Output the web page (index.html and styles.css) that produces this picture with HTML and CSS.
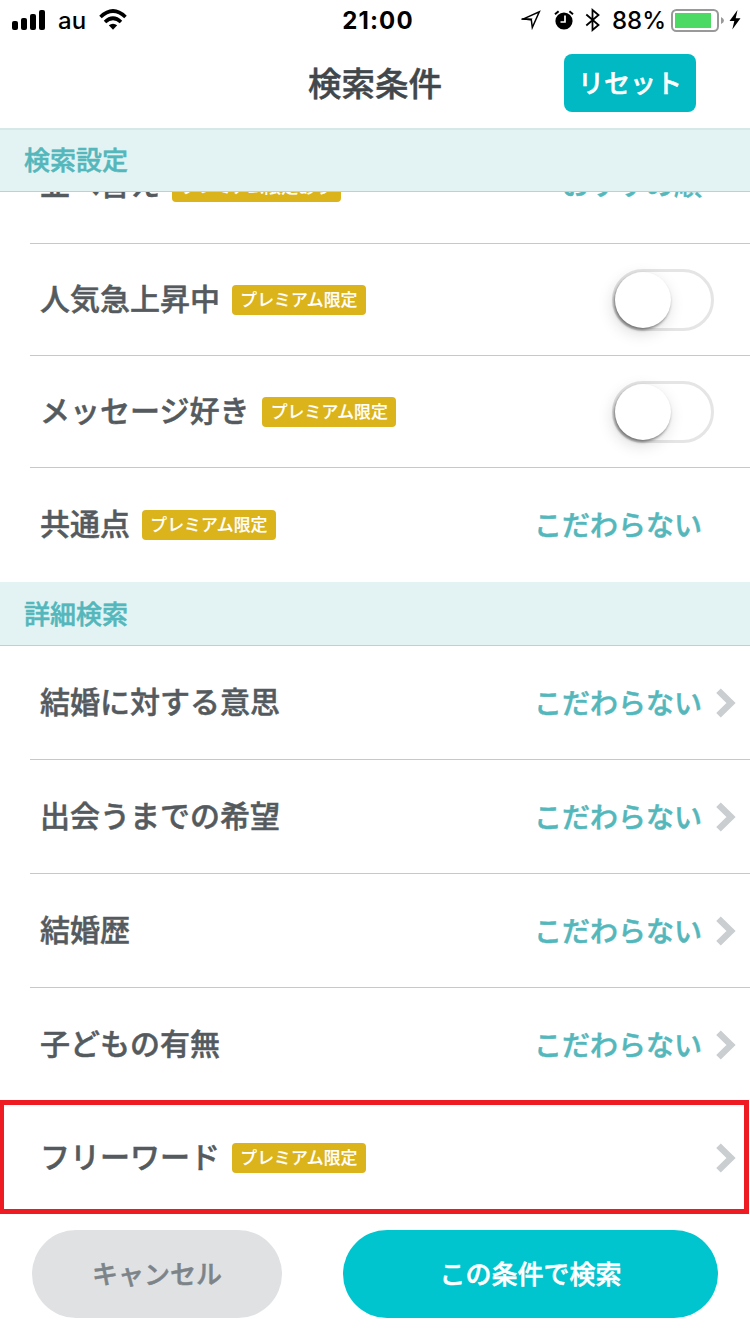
FILE: index.html
```
<!DOCTYPE html>
<html lang="ja">

<head>
    <meta charset="UTF-8">
    <meta name="viewport" content="width=device-width, initial-scale=1.0">
    <title>検索条件</title>
    <link rel="stylesheet" href="styles.css">
</head>

<body>
    <div class="status-bar">
        <div class="status-left">
            <svg class="signal" width="34" height="20" viewBox="0 0 34 20">
                <rect x="0" y="11" width="6" height="9" rx="2" />
                <rect x="9" y="8" width="6" height="12" rx="2" />
                <rect x="18" y="4" width="6" height="16" rx="2" />
                <rect x="27" y="0" width="6" height="20" rx="2" />
            </svg>
            <span class="carrier">au</span>
            <svg class="wifi" width="30" height="22" viewBox="0 0 30 22">
                <path d="M1.500 8Q14 -4 26.500 8M6 13Q14 5.500 22 13" fill="none" stroke="#000" stroke-width="3.600" />
                <path d="M9.800 16.300Q14 13 18.200 16.300L14 20.800Z" />
            </svg>
        </div>
        <div class="status-time">21:00</div>
        <div class="status-right">
            <svg class="location" width="20" height="20" viewBox="0 0 20 20">
                <path d="M2.500 8.900L18.300 1.800L11.300 17.500L10.300 9.700Z" fill="none" stroke="#000" stroke-width="1.500" />
                <path d="M0.500 8.300L11.500 8.500L10.500 10.200L1 9.700Z" />
            </svg>
            <svg class="alarm" width="20" height="20" viewBox="0 0 20 20">
                <circle cx="10" cy="11" r="8.600" />
                <path d="M1 4.300L4.600 1.300M19 4.300L15.400 1.300" stroke="#000" stroke-width="2" />
                <path d="M11 5.500V12H6.500" fill="none" stroke="#fff" stroke-width="1.700" />
            </svg>
            <svg class="bluetooth" width="16" height="24" viewBox="0 0 16 24">
                <path d="M1.300 6.500L13.500 17L7.500 22V2L13.500 7L1.300 17.500" fill="none" stroke="#000" stroke-width="1.800" />
            </svg>
            <span class="percent">88%</span>
            <svg class="battery" width="54" height="24" viewBox="0 0 54 24">
                <rect x="1" y="2" width="46" height="21" rx="4.500" fill="#fff" stroke="#999" stroke-width="2" />
                <rect x="4" y="5" width="36" height="15" fill="#4cd964" />
                <path d="M50 9Q53 10.500 53 12.500T50 16Z" fill="#999" />
            </svg>
            <svg class="bolt" width="12" height="20" viewBox="0 0 12 20">
                <path d="M8.500 0L0.500 11H5.300L3.300 19.500L11.500 8.300H6.700Z" />
            </svg>
        </div>
    </div>

    <header class="header">
        <h1>検索条件</h1>
        <button class="reset">リセット</button>
    </header>

    <h2 class="section-title section-top">検索設定</h2>
    <div class="list">
        <div class="row row-cut">
            <span class="label">並べ替え</span>
            <span class="badge">プレミアム限定あり</span>
            <span class="value">おすすめ順</span>
        </div>
        <div class="row row-switch">
            <span class="label">人気急上昇中</span>
            <span class="badge">プレミアム限定</span>
            <span class="switch"><span class="knob"></span></span>
        </div>
        <div class="row row-switch">
            <span class="label label-kana">メッセージ好き</span>
            <span class="badge">プレミアム限定</span>
            <span class="switch"><span class="knob"></span></span>
        </div>
        <div class="row row-last">
            <span class="label">共通点</span>
            <span class="badge">プレミアム限定</span>
            <span class="value">こだわらない</span>
        </div>

        <h2 class="section-title">詳細検索</h2>
        <div class="row">
            <span class="label">結婚に対する意思</span>
            <span class="value">こだわらない</span>
            <svg class="chevron" viewBox="0 0 20 30"><path d="M2.500 2.700L15 15L2.500 27.300" /></svg>
        </div>
        <div class="row">
            <span class="label">出会うまでの希望</span>
            <span class="value">こだわらない</span>
            <svg class="chevron" viewBox="0 0 20 30"><path d="M2.500 2.700L15 15L2.500 27.300" /></svg>
        </div>
        <div class="row">
            <span class="label">結婚歴</span>
            <span class="value">こだわらない</span>
            <svg class="chevron" viewBox="0 0 20 30"><path d="M2.500 2.700L15 15L2.500 27.300" /></svg>
        </div>
        <div class="row row-children">
            <span class="label">子どもの有無</span>
            <span class="value">こだわらない</span>
            <svg class="chevron" viewBox="0 0 20 30"><path d="M2.500 2.700L15 15L2.500 27.300" /></svg>
        </div>
        <div class="highlight">
            <span class="label">フリーワード</span>
            <span class="badge">プレミアム限定</span>
            <svg class="chevron" viewBox="0 0 20 30"><path d="M2.500 2.700L15 15L2.500 27.300" /></svg>
        </div>
    </div>

    <footer class="footer">
        <button class="cancel">キャンセル</button>
        <button class="search">この条件で検索</button>
    </footer>
</body>

</html>
```
FILE: styles.css
```
* {
    box-sizing: border-box;
}

body {
    margin: 0;
    width: 750px;
    height: 1334px;
    overflow: hidden;
    display: flex;
    flex-direction: column;
    background-color: #fff;
    color: #545a5e;
    font-family: "Noto Sans CJK JP", sans-serif;
    font-weight: 500;
    -webkit-text-stroke: 0.5px;
}

h1,
h2 {
    margin: 0;
    font-weight: 500;
}

button {
    border: none;
    padding: 0 0 3px;
    font-family: inherit;
    font-weight: 500;
    font-size: 26px;
    color: #fff;
    cursor: pointer;
}

svg {
    display: block;
    flex: none;
}

/* status bar */
.status-bar {
    height: 40px;
    display: grid;
    grid-template-columns: 1fr 80px 1fr;
    align-items: center;
    padding: 0 9px 0 12px;
    font-family: Inter, sans-serif;
    font-size: 24px;
    color: #000;
    -webkit-text-stroke: 0;
}

.status-left,
.status-right {
    display: flex;
    align-items: center;
}

.status-right {
    justify-content: flex-end;
}

.carrier {
    margin-left: 12px;
    padding-top: 1px;
}

.wifi {
    margin-left: 13px;
}

.status-time {
    padding: 1px 0 0 3px;
    text-align: center;
    font-weight: 700;
    letter-spacing: 1.1px;
}

.alarm {
    margin-left: 13px;
}

.bluetooth {
    margin-left: 11px;
}

.percent {
    margin-left: 11px;
    padding-top: 1px;
}

.battery {
    margin-left: 5px;
}

.bolt {
    margin-left: 4px;
}

/* header */
.header {
    height: 88px;
    display: grid;
    grid-template-columns: 1fr 134px 1fr;
    align-items: center;
    padding-bottom: 2px;
}

.header h1 {
    grid-column: 2;
    padding-bottom: 2px;
    font-size: 33.5px;
    line-height: 40px;
    color: #41474b;
    white-space: nowrap;
}

.reset {
    width: 132px;
    height: 58px;
    margin: 0 54px 0 0;
    justify-self: end;
    border-radius: 8px;
    background-color: #00b9c2;
}

.section-title {
    height: 64px;
    padding: 0 24px;
    border-bottom: 1px solid #c8cccd;
    background-color: #e3f3f3;
    color: #53b7bb;
    font-size: 26px;
    line-height: 61px;
}

.section-top {
    border-top: 2px solid #d6e8e8;
    line-height: 57px;
}

/* list, scrolled a little under the first section title */
.list {
    height: 1022px;
    overflow: hidden;
}

.row {
    height: 114px;
    margin-left: 30px;
    padding: 0 14px 0 10px;
    display: flex;
    align-items: center;
    border-bottom: 1px solid #c8c8cb;
}

.row-cut {
    height: 113px;
    margin-top: -61px;
    padding-right: 48px;
}

.row-switch {
    height: 112px;
    padding-right: 36px;
}

.row-last {
    padding-right: 48px;
    border-bottom: none;
}

.row-children {
    height: 112px;
    padding-top: 2px;
    border-bottom: none;
}

.highlight {
    width: 749px;
    height: 114px;
    padding: 2px 8px 0 36px;
    display: flex;
    align-items: center;
    border: 5px solid #ef1b23;
    border-left-width: 4px;
}

.label {
    font-size: 30px;
    line-height: 40px;
    padding-bottom: 6px;
}

.label-kana {
    padding-right: 1px;
}

.row-cut .label {
    padding-bottom: 11px;
}

.badge {
    height: 30px;
    margin-left: 12px;
    padding: 0 8.3px;
    border-radius: 4px;
    background-color: #dbb31b;
    color: #fff;
    font-size: 16.85px;
    letter-spacing: 0.06px;
    line-height: 28px;
    -webkit-text-stroke: 0.2px;
}

.row-cut .badge {
    padding: 0 9px;
}

.value {
    margin-left: auto;
    padding-bottom: 2px;
    font-size: 28px;
    line-height: 40px;
    color: #53b7bb;
}

.row-cut .value {
    padding-bottom: 8px;
}

.chevron {
    width: 20px;
    height: 30px;
    margin-left: 14px;
    fill: none;
    stroke: #caced1;
    stroke-width: 6.5;
}

.badge + .chevron {
    margin-left: auto;
}

.switch {
    width: 102px;
    height: 62px;
    margin-left: auto;
    border: 3px solid #e5e5e5;
    border-radius: 31px;
}

.knob {
    display: block;
    width: 56px;
    height: 56px;
    border-radius: 50%;
    background-color: #fff;
    box-shadow: -1px 2px 3px rgba(0, 0, 0, 0.45), -2px 5px 16px rgba(0, 0, 0, 0.15);
}

/* bottom buttons */
.footer {
    height: 120px;
    padding: 0 32px;
    display: flex;
    align-items: center;
    justify-content: space-between;
}

.footer button {
    height: 88px;
    border-radius: 44px;
}

.cancel {
    width: 250px;
    background-color: #dfe1e3;
}

.footer .cancel {
    color: #7c8489;
}

.search {
    width: 375px;
    background-color: #00c5cf;
}
```
